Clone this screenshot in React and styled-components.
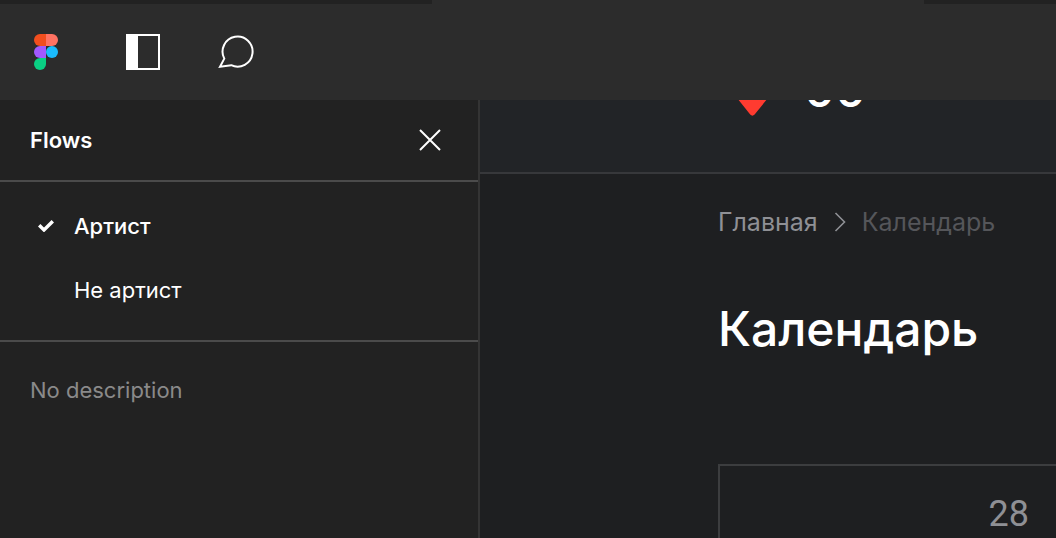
import React, {useState} from 'react';
import styled, {createGlobalStyle} from 'styled-components';

const GlobalStyle = createGlobalStyle`
  *, *::before, *::after {
    box-sizing:border-box;
  }
  body {
    margin:0;
    background-color:#1e1f21;
    font-family:Inter, 'Liberation Sans', sans-serif;
    color:#fff;
  }
`;

const Page = styled.div`
  display:flex;
  flex-direction:column;
  height:100vh;
  overflow:hidden;
`;

const TabStrip = styled.div`
  display:flex;
  flex:none;
  height:4px;
  background-color:#222;
`;
const ActiveTab = styled.div`
  width:492px;
  margin-left:432px;
  background-color:#2c2c2c;
`;

const Toolbar = styled.header`
  display:flex;
  flex:none;
  align-items:center;
  height:96px;
  background-color:#2c2c2c;
`;
const ToolButton = styled.button`
  display:flex;
  align-items:center;
  width:92px;
  height:96px;
  padding:0 0 0 34px;
  border:0;
  background:none;
  color:#fff;
  cursor:pointer;
`;

const Workspace = styled.div`
  display:flex;
  flex:1;
  min-height:0;
`;

const Sidebar = styled.aside`
  flex:none;
  width:480px;
  border-right:2px solid #343434;
  background-color:#222;
  font-size:22px;
  line-height:32px;
`;
const SidebarHeader = styled.div`
  display:flex;
  align-items:center;
  justify-content:space-between;
  height:82px;
  padding:0 30px;
  border-bottom:2px solid #4b4b4b;
`;
const SidebarTitle = styled.h2`
  margin:0;
  font-size:22px;
  font-weight:600;
`;
const CloseButton = styled.button`
  display:flex;
  align-items:center;
  justify-content:center;
  width:36px;
  height:36px;
  padding:0;
  border:0;
  background:none;
  color:#fff;
  cursor:pointer;
`;
const FlowList = styled.ul`
  margin:0;
  padding:12px 0 18px;
  list-style:none;
  border-bottom:2px solid #4b4b4b;
`;
const FlowButton = styled.button`
  display:flex;
  align-items:center;
  width:100%;
  height:64px;
  padding:0 30px;
  border:0;
  background:none;
  color:#fff;
  font:inherit;
  font-weight:${({$active}) => ($active ? 500 : 400)};
  cursor:pointer;
`;
const CheckSlot = styled.span`
  display:flex;
  justify-content:center;
  width:32px;
  margin-right:12px;
`;
const Description = styled.p`
  margin:0;
  padding:32px 30px;
  color:#8a8a8a;
`;

const Preview = styled.main`
  flex:1;
  min-width:0;
  overflow:hidden;
`;
const SiteHeader = styled.div`
  display:flex;
  align-items:flex-end;
  gap:38px;
  height:74px;
  padding:0 0 56px 258px;
  overflow:hidden;
  border-bottom:2px solid #37383b;
  background-color:#222427;
`;
const SiteCount = styled.span`
  font-size:48px;
  line-height:52px;
  font-weight:500;
`;
const Content = styled.div`
  padding:32px 0 0 238px;
`;
const Breadcrumbs = styled.nav`
  display:flex;
  align-items:center;
  gap:16px;
  font-size:25px;
  line-height:32px;
  color:#8f9095;
`;
const Crumb = styled.a`
  color:inherit;
  text-decoration:none;
`;
const CurrentCrumb = styled.span`
  color:#55565a;
`;
const Title = styled.h1`
  margin:60px 0 104px;
  font-size:48px;
  line-height:62px;
  font-weight:500;
`;
const CalendarTable = styled.table`
  width:100%;
  height:240px;
  border-collapse:separate;
  border-spacing:0;
`;
const Day = styled.td`
  padding:28px 27px;
  border-top:2px solid #3c3d3f;
  border-left:2px solid #3c3d3f;
  color:#8f9095;
  font-family:Roboto, Inter, sans-serif;
  font-size:36px;
  line-height:40px;
  text-align:right;
  vertical-align:top;
`;

const FigmaIcon = () => (
  <svg width='24' height='36' viewBox='0 0 24 36' aria-hidden='true'>
    <path d='M6 0h6v12H6A6 6 0 0 1 6 0z' fill='#f24e1e' />
    <path d='M12 0h6a6 6 0 0 1 0 12h-6z' fill='#ff7262' />
    <path d='M6 12h6v12H6a6 6 0 0 1 0-12z' fill='#a259ff' />
    <circle cx='18' cy='18' r='6' fill='#1abcfe' />
    <path d='M6 24h6v6a6 6 0 1 1-6-6z' fill='#0acf83' />
  </svg>
);

const PanelIcon = () => (
  <svg width='34' height='36' viewBox='0 0 34 36' fill='none' aria-hidden='true'>
    <path d='M1 1h32v34H1z' stroke='currentColor' strokeWidth='2' />
    <path d='M0 0h12v36H0z' fill='currentColor' />
  </svg>
);

const CommentIcon = () => (
  <svg width='36' height='34' viewBox='0 0 36 34' fill='none' aria-hidden='true'>
    <path
      d='M6.3 23.6A15 15 0 1 1 13.2 30.2L2 31.8z'
      stroke='currentColor'
      strokeWidth='2'
    />
  </svg>
);

const CloseIcon = () => (
  <svg width='22' height='22' viewBox='0 0 22 22' fill='none' aria-hidden='true'>
    <path d='M1 1l20 20M21 1L1 21' stroke='currentColor' strokeWidth='2' />
  </svg>
);

const CheckIcon = () => (
  <svg width='16' height='12' viewBox='0 0 16 12' fill='none' aria-hidden='true'>
    <path d='M1.2 5.2L6 10L14.8 1.2' stroke='currentColor' strokeWidth='3.4' />
  </svg>
);

const HeartIcon = () => (
  <svg width='28' height='26' viewBox='0 0 28 26' overflow='visible' aria-hidden='true'>
    <path
      d='M12.2 24.6L-3 5.4A8.8 8.8 0 0 1 14 -5A8.8 8.8 0 0 1 32 5.4L16.6 24.6Q14.4 26.8 12.2 24.6z'
      fill='#ff3b30'
    />
  </svg>
);

const ChevronIcon = () => (
  <svg width='12' height='20' viewBox='0 0 12 20' fill='none' aria-hidden='true'>
    <path d='M1.5 1l9 9-9 9' stroke='currentColor' strokeWidth='1.6' />
  </svg>
);

const flows = ['Артист', 'Не артист'];

const App = () => {
  const [active, setActive] = useState(0);
  return (
    <>
      <GlobalStyle />
      <Page>
        <TabStrip>
          <ActiveTab />
        </TabStrip>
        <Toolbar>
          <ToolButton aria-label='Figma'><FigmaIcon /></ToolButton>
          <ToolButton aria-label='Sidebar'><PanelIcon /></ToolButton>
          <ToolButton aria-label='Comments'><CommentIcon /></ToolButton>
        </Toolbar>
        <Workspace>
          <Sidebar>
            <SidebarHeader>
              <SidebarTitle>Flows</SidebarTitle>
              <CloseButton aria-label='Close'><CloseIcon /></CloseButton>
            </SidebarHeader>
            <FlowList>
              {flows.map((flow, index) => (
                <li key={flow}>
                  <FlowButton $active={index === active} onClick={() => setActive(index)}>
                    <CheckSlot>{index === active && <CheckIcon />}</CheckSlot>
                    {flow}
                  </FlowButton>
                </li>
              ))}
            </FlowList>
            <Description>No description</Description>
          </Sidebar>
          <Preview>
            <SiteHeader>
              <HeartIcon />
              <SiteCount>00</SiteCount>
            </SiteHeader>
            <Content>
              <Breadcrumbs>
                <Crumb href='#'>Главная</Crumb>
                <ChevronIcon />
                <CurrentCrumb>Календарь</CurrentCrumb>
              </Breadcrumbs>
              <Title>Календарь</Title>
              <CalendarTable>
                <tbody>
                  <tr>
                    <Day>28</Day>
                  </tr>
                </tbody>
              </CalendarTable>
            </Content>
          </Preview>
        </Workspace>
      </Page>
    </>
  );
}

export default App;
